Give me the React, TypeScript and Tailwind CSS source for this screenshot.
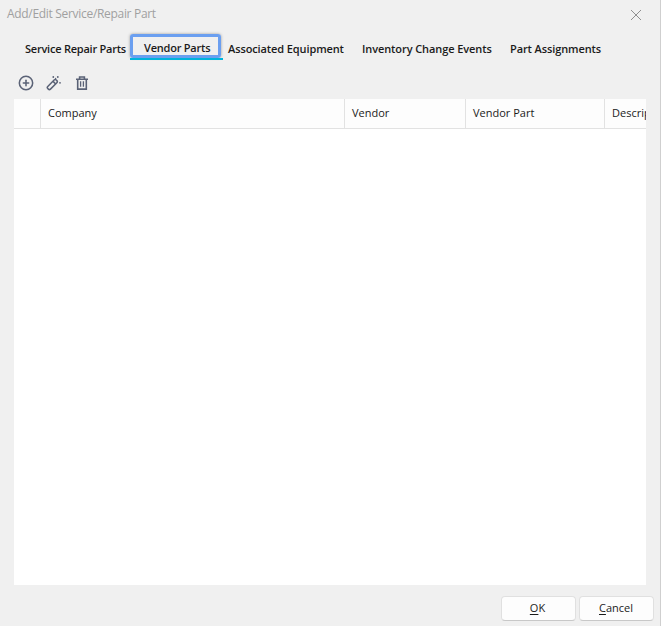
import { CirclePlus } from "lucide-react";
import { useState } from "react";

const tabs = [
  { name: "Service Repair Parts", box: "w-[112px] pl-[7px] tracking-[-0.23px]" },
  { name: "Vendor Parts", box: "w-[91px] tracking-[-0.22px]" },
  { name: "Associated Equipment", box: "w-[134px] pl-[5px] tracking-[-0.11px]" },
  { name: "Inventory Change Events", box: "w-[148px] pl-[5px] tracking-[-0.09px]" },
  { name: "Part Assignments", box: "w-[110px] pl-[5px] tracking-[-0.11px]" },
];

const columns = [
  { name: "", width: "w-[27px]" },
  { name: "Company", width: "w-[304px]" },
  { name: "Vendor", width: "w-[121px]" },
  { name: "Vendor Part", width: "w-[139px]" },
  { name: "Description", width: "w-[120px]" },
];

const WandIcon = () => (
  <svg width="16" height="16" viewBox="0 0 16 16" fill="none" stroke="currentColor" strokeWidth="1.5">
    <rect x="-1.9" y="-6" width="3.8" height="12" rx="1.5" transform="translate(6.3 9.6) rotate(45)" />
    <path d="M7.1 6.4l2.8 2.8" />
    <g fill="currentColor" stroke="none">
      <circle cx="7.3" cy="2" r="0.9" />
      <circle cx="9.6" cy="3.4" r="0.7" />
      <circle cx="11.8" cy="2" r="0.9" />
      <circle cx="14" cy="7.8" r="0.9" />
    </g>
  </svg>
);

const TrashIcon = () => (
  <svg width="14" height="14" viewBox="0 0 14 14" fill="none" stroke="currentColor" strokeWidth="1.6">
    <path d="M1 3.2h12M4.6 3V1h4.8v2M2.7 3.2v9.9h8.6V3.2" />
    <path d="M5.6 5.3v5.5M8.4 5.3v5.5" strokeWidth="1.3" />
  </svg>
);

export default function App() {
  const [active, setActive] = useState("Vendor Parts");

  return (
    <div className="flex h-[626px] w-[661px] flex-col overflow-hidden border-r border-[#cfcfcf] bg-[#f0f0f0] font-['Open_Sans','Noto_Sans',sans-serif] text-[11px] text-[#1b1b1b]">
      <header className="flex h-[30px] shrink-0 items-start justify-between pl-[7px] pr-[18px]">
        <span className="pt-[6px] text-[12px] leading-4 tracking-[-0.31px] text-[#a0a0a0]">Add/Edit Service/Repair Part</span>
        <button aria-label="Close" className="mt-[9px] text-[#8f8f8f]">
          <svg width="12" height="12" viewBox="0 0 12 12" fill="none" stroke="currentColor">
            <path d="M1 1l10 10M11 1L1 11" />
          </svg>
        </button>
      </header>

      <nav className="flex h-[38px] shrink-0 pl-[18px]">
        {tabs.map((tab) => (
          <div key={tab.name} className={tab.name === active ? "h-[30px] w-[93px] shrink-0" : "h-[30px] shrink-0"}>
            <button
              onClick={() => setActive(tab.name)}
              className={`block whitespace-nowrap text-left font-semibold leading-4 ${tab.box} ${
                tab.name === active
                  ? "mt-[4px] h-[24px] rounded-[3px] border-3 border-[#6b9ff0] pl-[11px] pt-[3px] shadow-[0_0_3px_#9a9a9a]"
                  : "h-[38px]"
              }`}
            >
              {tab.name}
            </button>
            {tab.name === active && <div className="relative h-[2px] bg-[#00b4dc]" />}
          </div>
        ))}
      </nav>

      <div className="flex h-[30px] shrink-0 items-center gap-[12px] pl-[18px] text-[#5a6276]">
        <button><CirclePlus size={16} strokeWidth={2.3} /></button>
        <button><WandIcon /></button>
        <button className="pl-px"><TrashIcon /></button>
      </div>

      <main className="ml-[14px] mr-[14px] mt-px h-[486px] shrink-0 overflow-hidden bg-white">
        <div className="flex h-[30px] border-b border-[#e2e2e2] bg-[#fdfdfd]">
          {columns.map((col) => (
            <div key={col.name} className={`${col.width} shrink-0 border-r border-[#e2e2e2] pl-[7px] leading-[28px]`}>
              {col.name}
            </div>
          ))}
        </div>
      </main>

      <footer className="flex justify-end gap-[3px] pr-[6px] pt-[11px]">
        <button className="h-[25px] w-[75px] rounded-[4px] border border-[#e0e0e0] border-b-[#c8c8c8] bg-[#fdfdfd] pr-[2px]">
          <span className="underline underline-offset-2">O</span>K
        </button>
        <button className="h-[25px] w-[75px] rounded-[4px] border border-[#e0e0e0] border-b-[#c8c8c8] bg-[#fdfdfd] pr-px">
          <span className="underline underline-offset-2">C</span>ancel
        </button>
      </footer>
    </div>
  );
}
